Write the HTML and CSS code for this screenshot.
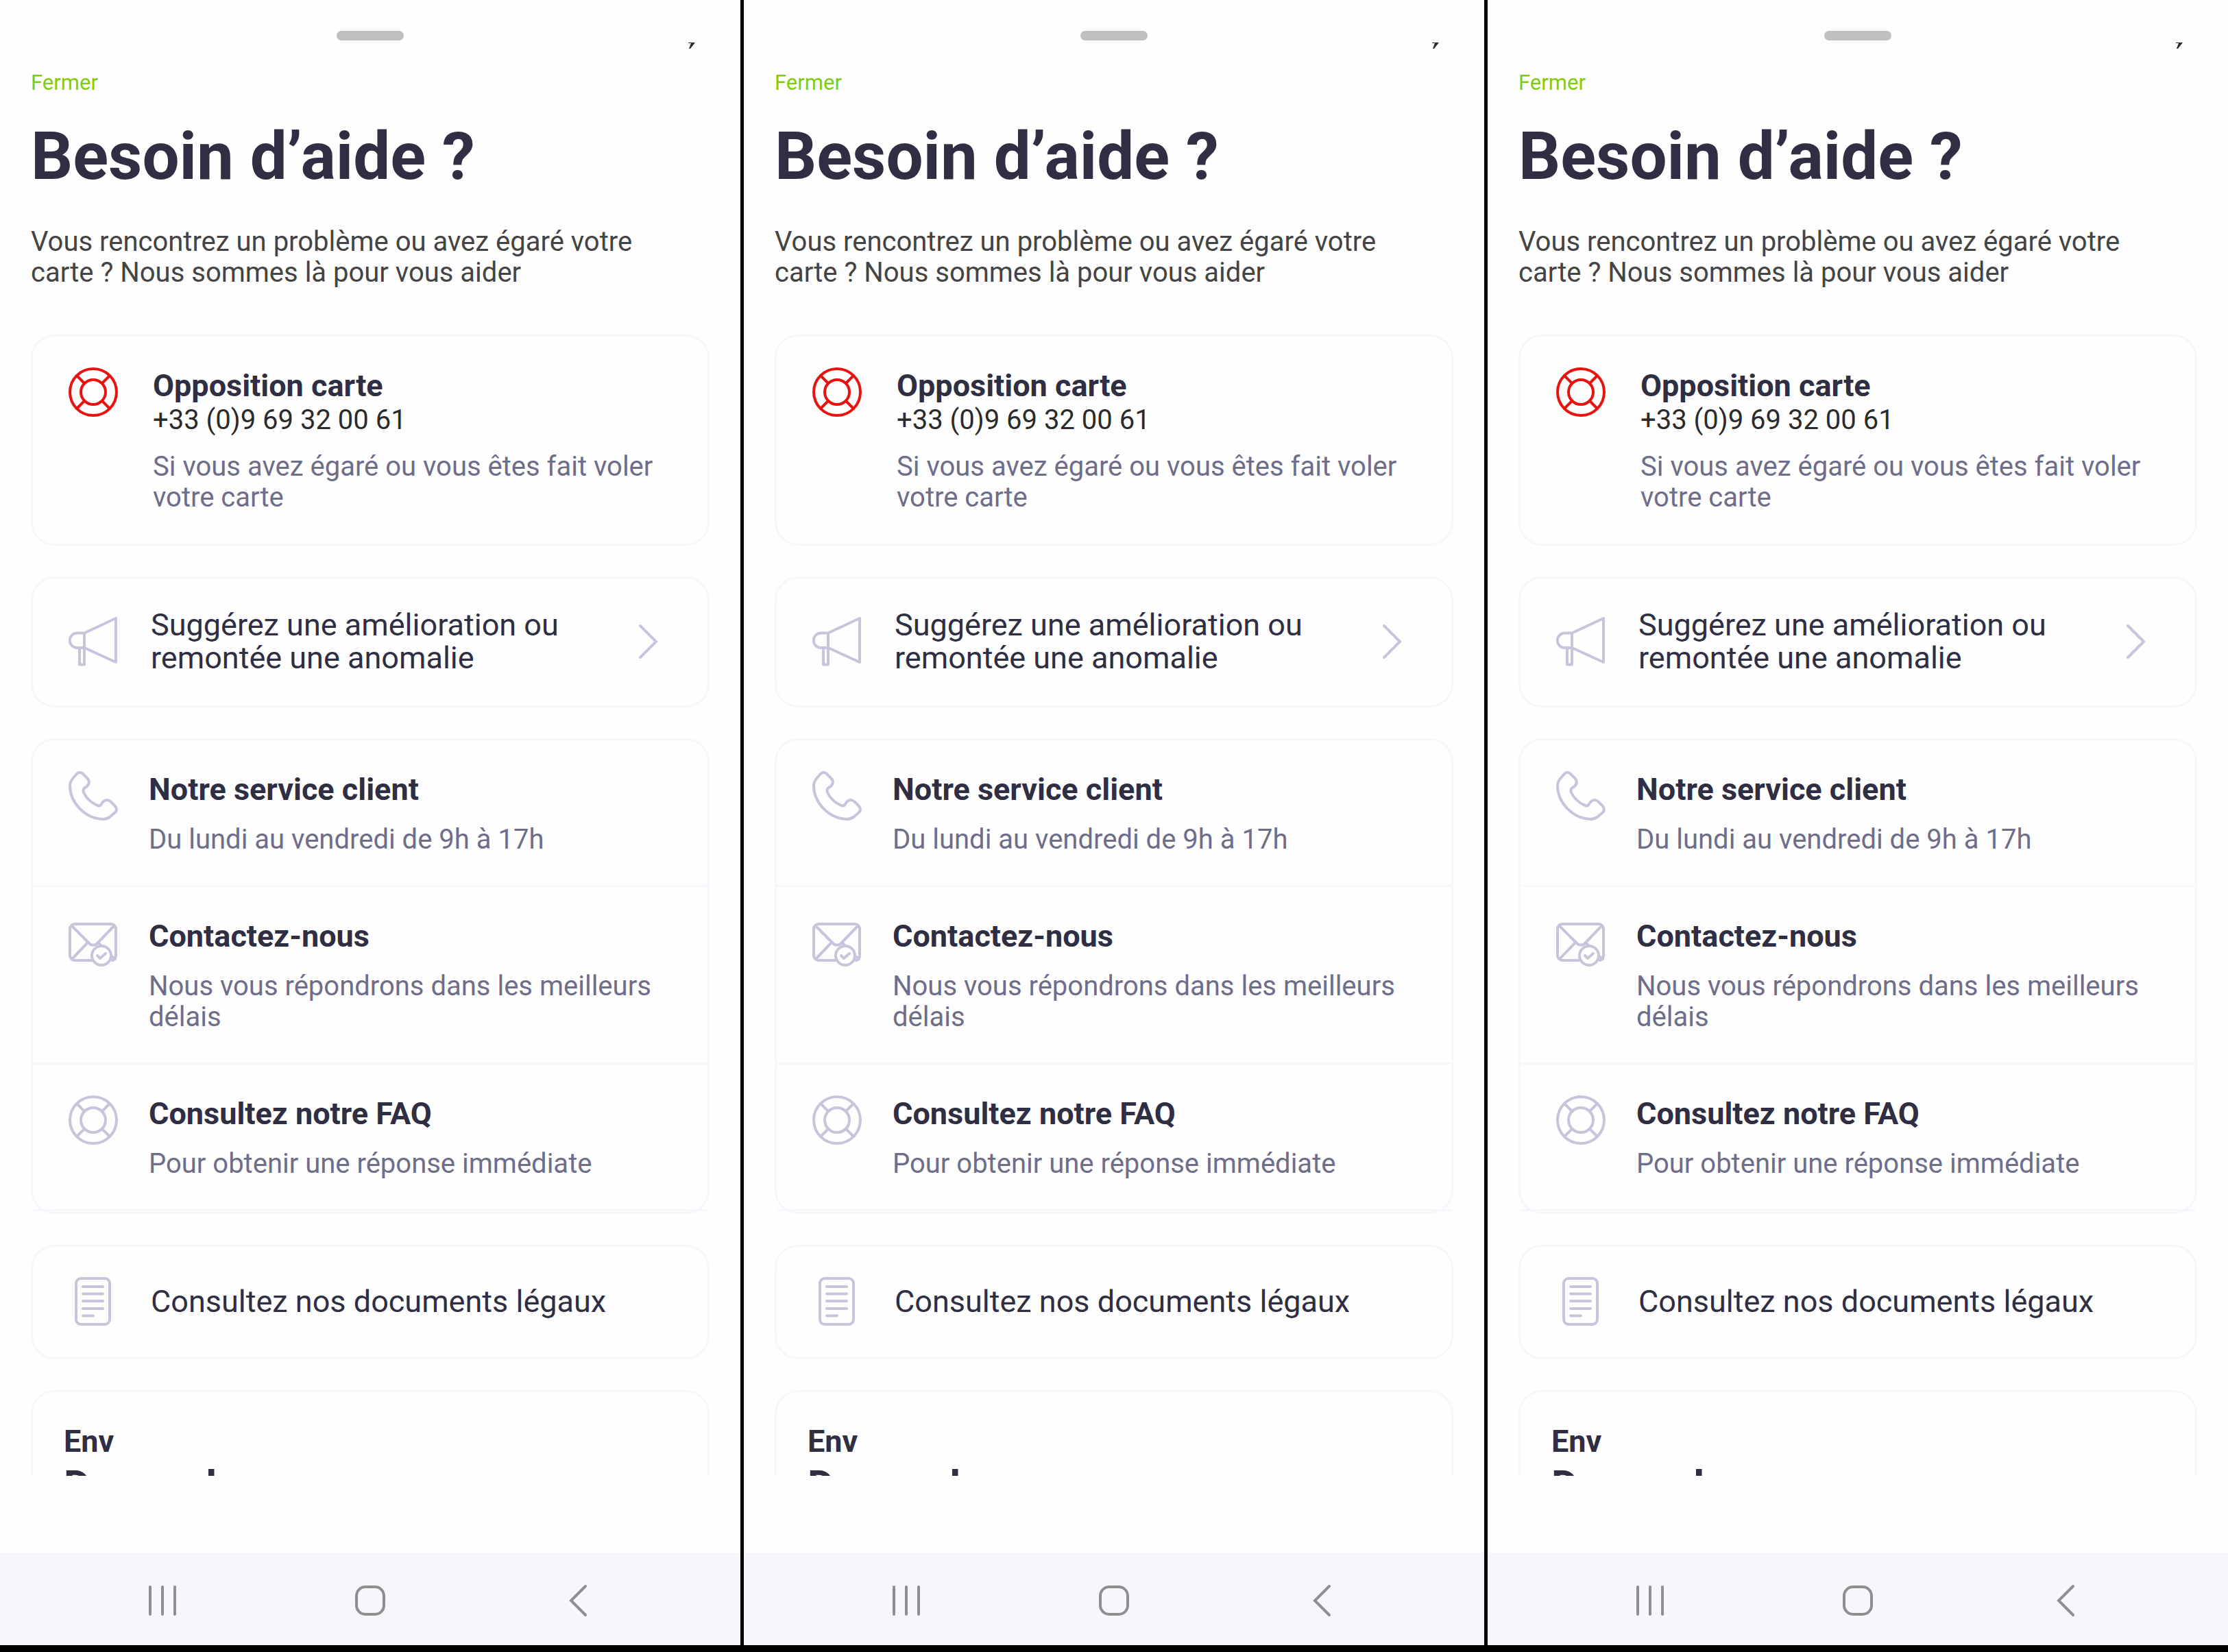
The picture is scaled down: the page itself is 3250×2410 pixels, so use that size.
FILE: index.html
```html
<!DOCTYPE html>
<html lang="fr">
<head>
<meta charset="utf-8">
<title>Besoin d’aide ?</title>
<link rel="stylesheet" href="styles.css">
</head>
<body>
<svg class="sprite" aria-hidden="true">
  <symbol id="buoy" viewBox="0 0 72 72">
    <circle cx="36" cy="36" r="34"/><circle cx="36" cy="36" r="18"/>
    <path d="M12 12l11 11M60 12L49 23M12 60l11-11M60 60L49 49"/>
  </symbol>
  <symbol id="horn" viewBox="0 0 72 72">
    <path d="M23 23.500L69 2v64L23 45zM23 23.500H12.500a10.750 10.750 0 0 0 0 21.500H23M16 45v24.500h7V45"/>
  </symbol>
  <symbol id="phone" viewBox="0 0 72 72">
    <path d="M11 5C14 1 18 1 21 4L27 10C31 14 31 18 27 22L24 24C21 26 21 28 22 31C26 40 33 46 42 50C45 51 47 50 48 48L50 45C54 41 58 41 62 45L67 50C71 54 71 58 67 61L60 67C57 69 54 70 50 70C23 69 2 45 2 21C2 18 3 15 5 12Z"/>
  </symbol>
  <symbol id="mail" viewBox="0 0 72 72">
    <g transform="translate(0 7)">
      <path d="M33 55H9a7 7 0 0 1-7-7V9a7 7 0 0 1 7-7h53a7 7 0 0 1 7 7v39c0 4-2 6-5 7M4 4l25 25c4 5 10 5 14 0L67 4M5 53l23-24M43 29l4 4M63 49l5 4"/>
      <circle cx="48" cy="48" r="14"/><path d="M42 48l4 4 8-7"/>
    </g>
  </symbol>
  <symbol id="document" viewBox="0 0 72 72">
    <rect x="11" y="2" width="49" height="67" rx="7"/>
    <path d="M21 14h29M21 24.500h29M21 35h29M21 46h29M21 56.500h15"/>
  </symbol>
  <symbol id="next" viewBox="0 0 28 50"><path d="M2 2l23 23L2 48"/></symbol>
  <symbol id="recents" viewBox="0 0 44 44"><path d="M4 2v40M22 2v40M40 2v40"/></symbol>
  <symbol id="home" viewBox="0 0 44 44"><rect x="2" y="2" width="40" height="40" rx="13"/></symbol>
  <symbol id="back" viewBox="0 0 28 48"><path d="M25 3L4 24l21 21"/></symbol>
  <symbol id="mark" viewBox="0 0 12 10"><path d="M1 0h10L4 9H2l3-8H1z"/></symbol>
</svg>

<div class="phones" id="phones">
  <section class="phone">
    <main class="sheet">
      <header class="sheet-top">
        <span class="handle"></span>
        <svg class="mark"><use href="#mark"/></svg>
      </header>
      <button class="close" type="button">Fermer</button>
      <h1 class="title">Besoin d’aide&nbsp;?</h1>
      <p class="intro">Vous rencontrez un problème ou avez égaré votre carte&nbsp;? Nous sommes là pour vous aider</p>

      <div class="cards">
        <article class="card card-alert">
          <svg class="icon icon-red"><use href="#buoy"/></svg>
          <div class="text">
            <h2 class="name">Opposition carte</h2>
            <a class="tel" href="tel:+33969320061">+33 (0)9 69 32 00 61</a>
            <p class="note">Si vous avez égaré ou vous êtes fait voler votre carte</p>
          </div>
        </article>

        <a class="card card-link" href="#suggestion">
          <svg class="icon"><use href="#horn"/></svg>
          <span class="label">Suggérez une amélioration ou remontée une anomalie</span>
          <svg class="next"><use href="#next"/></svg>
        </a>

        <ul class="card card-list">
          <li class="row">
            <svg class="icon"><use href="#phone"/></svg>
            <div class="text"><h2 class="name">Notre service client</h2><p class="note">Du lundi au vendredi de 9h à 17h</p></div>
          </li>
          <li class="row">
            <svg class="icon"><use href="#mail"/></svg>
            <div class="text"><h2 class="name">Contactez-nous</h2><p class="note">Nous vous répondrons dans les meilleurs délais</p></div>
          </li>
          <li class="row">
            <svg class="icon"><use href="#buoy"/></svg>
            <div class="text"><h2 class="name">Consultez notre FAQ</h2><p class="note">Pour obtenir une réponse immédiate</p></div>
          </li>
        </ul>

        <a class="card card-link" href="#documents">
          <svg class="icon"><use href="#document"/></svg>
          <span class="label">Consultez nos documents légaux</span>
        </a>

        <article class="card card-env">
          <h2 class="name">Env</h2>
          <p class="env-title">Demande</p>
        </article>
      </div>
    </main>
    <nav class="navbar">
      <button type="button" aria-label="Applications récentes"><svg class="nav-icon"><use href="#recents"/></svg></button>
      <button type="button" aria-label="Accueil"><svg class="nav-icon"><use href="#home"/></svg></button>
      <button type="button" aria-label="Retour"><svg class="nav-icon"><use href="#back"/></svg></button>
    </nav>
  </section>
</div>
<script src="script.js"></script>
</body>
</html>
```
FILE: styles.css
```css
* { box-sizing: border-box; }

body {
  margin: 0;
  background: #000;
  color: #2f2e43;
  font-family: Roboto, "Liberation Sans", sans-serif;
}

h1, h2, p, ul { margin: 0; padding: 0; }
a { color: inherit; text-decoration: none; }
button { padding: 0; border: 0; background: none; font: inherit; cursor: pointer; }

.sprite { position: absolute; width: 0; height: 0; }

.phones {
  display: grid;
  grid-template-columns: repeat(3, 1fr);
  gap: 5px;
  height: 100vh;
  padding-bottom: 10px;
}

.phone {
  display: flex;
  flex-direction: column;
  min-width: 0;
  min-height: 0;
  background: #fefefe;
}

.sheet {
  flex: 1;
  display: flex;
  flex-direction: column;
  min-height: 0;
  margin-bottom: 112px;
  padding: 0 45px;
  overflow: hidden;
}

.sheet-top {
  display: grid;
  grid-template-columns: 1fr 98px 1fr;
  flex: none;
  height: 101px;
  padding-top: 45px;
}
.handle { grid-column: 2; height: 14px; border-radius: 7px; background: #c0c0c0; }
.mark {
  justify-self: end;
  width: 12px;
  height: 10px;
  margin: 17px 20px 0 0;
  fill: #2b2b2b;
}

.close {
  flex: none;
  align-self: flex-start;
  color: #81cc0e;
  font-size: 31px;
  line-height: 40px;
}

.title {
  margin-top: 31px;
  font-size: 96px;
  font-weight: 700;
  line-height: 112px;
}

.intro {
  margin-top: 46px;
  color: #444;
  font-size: 40px;
  line-height: 45px;
}

.cards {
  display: flex;
  flex-direction: column;
  gap: 45px;
  margin-top: 68px;
}

.card {
  flex: none;
  border: 3px solid #f7f6fd;
  border-radius: 34px;
}

.card-alert {
  display: flex;
  gap: 51px;
  padding: 45px 52px;
}

.icon {
  flex: none;
  width: 72px;
  height: 72px;
  fill: none;
  stroke: #c6c5dc;
  stroke-width: 4px;
  stroke-linecap: round;
  stroke-linejoin: round;
}
.icon-red { stroke: #e8130f; }

.text { flex: 1; min-width: 0; }
.name { font-size: 45px; font-weight: 700; line-height: 54px; }
.tel { display: block; color: #2b2b2b; font-size: 40px; line-height: 45px; }
.note { margin-top: 23px; color: #6e6d8a; font-size: 40px; line-height: 45px; }

.card-link {
  display: flex;
  align-items: center;
  gap: 48px;
  padding: 44px 72px 45px 52px;
  font-size: 45px;
  line-height: 48px;
}
.label { flex: 1; }
.next {
  width: 28px;
  height: 50px;
  fill: none;
  stroke: #c6c5dc;
  stroke-width: 4px;
  stroke-linecap: round;
}

.card-list { padding-bottom: 1px; list-style: none; }
.row {
  display: flex;
  gap: 45px;
  padding: 45px 52px 44px;
  border-bottom: 3px solid #f7f6fd;
}

.card-env { padding: 45px; }
.env-title { font-size: 60px; font-weight: 700; line-height: 74px; }

.navbar {
  display: grid;
  grid-template-columns: repeat(3, 1fr);
  flex: none;
  height: 135px;
  padding: 5px 85px 0;
  background: #f7f6fb;
}
.navbar button { display: flex; align-items: center; justify-content: center; }
.nav-icon { width: 44px; height: 48px; fill: none; stroke: #8f8f8f; stroke-width: 4px; stroke-linecap: round; }
```
FILE: script.js
```js
// The three phones show the same screen.
const phones = document.getElementById("phones");
const first = phones.querySelector(".phone");
for (let i = 0; i < 2; i++) {
  phones.appendChild(first.cloneNode(true));
}
```
